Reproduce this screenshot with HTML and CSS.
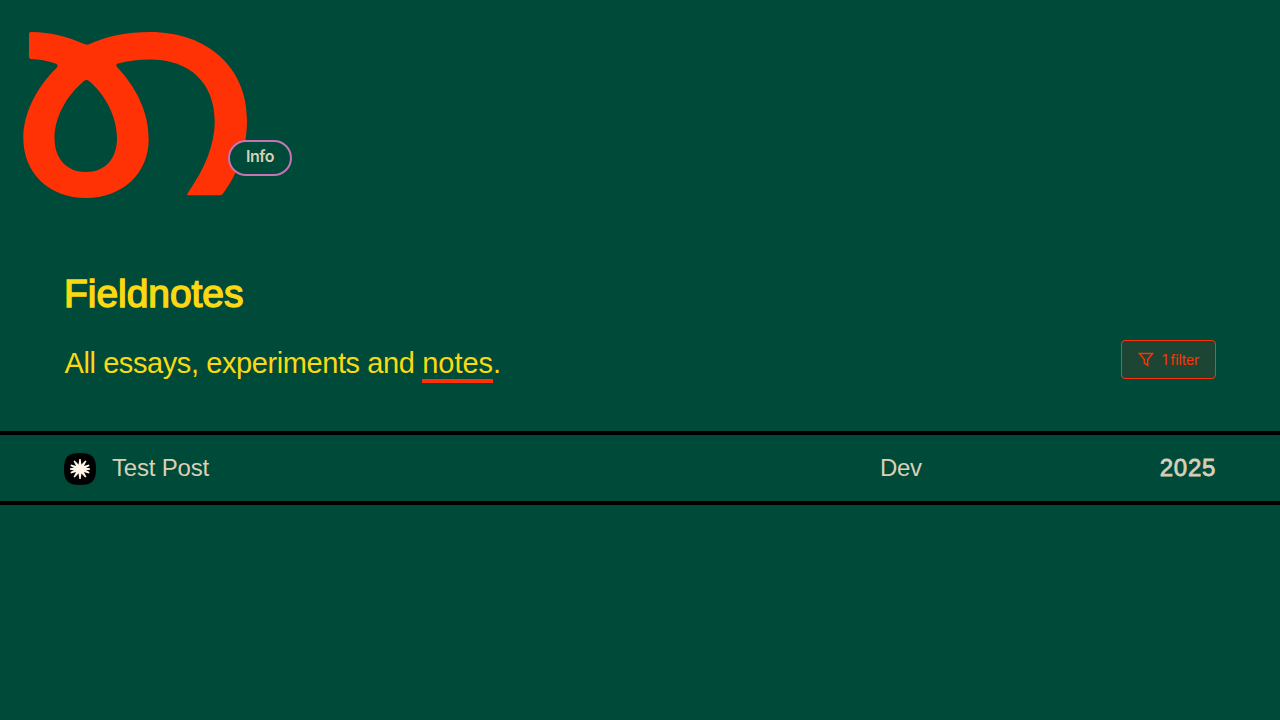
FILE: index.html
```html
<!DOCTYPE html>
<html lang="en">
<head>
<meta charset="utf-8">
<title>Fieldnotes</title>
<link rel="stylesheet" href="styles.css">
</head>
<body>
<header class="header">
  <a class="brand" href="#" aria-label="Home">
    <svg class="logo" viewBox="0 0 226 168" width="226" height="168">
      <path fill-rule="evenodd" d="M6 3Q6 1 8 1C29 1 45 6 62 13.300Q64 14.200 66 13.300C83 5 105 1 127 1C185 1 224 37 224 89C224 119 214 144 200 162.500Q199 164.300 197.500 164.300H165.500Q163.500 164.300 164.800 162C183 136 191.700 112 191.700 91C191.700 52 167 28.500 127 28.500C115 28.500 105 30 95 32.500Q92 33.500 94 36C114 57 125.700 82 125.700 108C125.700 143 99 167 63 167C27 167 .300 143 .300 107C.300 83 13 57 33.500 37Q36 34 33 32.700C26 30 17 28.500 8 28Q6 28 6 26ZM61 50C43 65 31.500 87 31.500 107C31.500 128 44 141 63 141C82 141 94 128 94 107C94 87 83 64 66 50Q63.500 48 61 50Z"/>
    </svg>
  </a>
  <a class="info" href="#">Info</a>
</header>
<main>
  <section class="intro">
    <h1 class="title">Fieldnotes</h1>
    <div class="intro-row">
      <p class="lead">All essays, experiments and <span class="marked">notes</span>.</p>
      <button class="filter">
        <svg class="funnel" viewBox="0 0 16 16" width="16" height="16"><path d="M1.300 1.400H14.700L9.700 7.500V13.300L6.400 11V7.500Z"/></svg>
        <span class="filter-label">1 filter</span>
      </button>
    </div>
  </section>
  <ul class="posts">
    <li class="post">
      <svg class="badge" viewBox="0 0 32 32" width="32" height="32">
        <path d="M16 0C28 0 32 4 32 16S28 32 16 32 0 28 0 16 4 0 16 0Z"/>
        <g class="star">
          <path id="ray" d="M15.300 6H16.700L18 16L16.700 26H15.300L14 16Z"/>
          <use href="#ray" transform="rotate(36 16 16)"/>
          <use href="#ray" transform="rotate(68 16 16)"/>
          <use href="#ray" transform="rotate(90 16 16)"/>
          <use href="#ray" transform="rotate(112 16 16)"/>
          <use href="#ray" transform="rotate(144 16 16)"/>
          <circle cx="16" cy="16" r="4.500"/>
        </g>
      </svg>
      <span class="post-title">Test Post</span>
      <span class="category">Dev</span>
      <span class="year">2025</span>
    </li>
  </ul>
</main>
</body>
</html>
```
FILE: styles.css
```css
* { box-sizing: border-box; }
body {
  margin: 0;
  min-height: 100vh;
  background: #004a39;
  color: #d9d0b8;
  font-family: "Liberation Sans", Arial, sans-serif;
}
a { color: inherit; text-decoration: none; }
.header {
  position: relative;
  height: 272px;
  padding: 31px 23px;
}
.brand { display: block; width: 226px; }
.logo { display: block; fill: #ff3205; }
.info {
  position: absolute;
  left: 228px;
  top: 140px;
  width: 64px;
  height: 36px;
  border: 2px solid #c475b4;
  border-radius: 18px;
  background: #004a39;
  font-family: Inter, sans-serif;
  font-size: 16px;
  font-weight: 600;
  line-height: 29px;
  text-align: center;
  letter-spacing: -.4px;
}
.intro { padding: 0 64px; color: #fad912; }
.title {
  margin: 0;
  font-size: 39px;
  font-weight: 400;
  line-height: 43px;
  letter-spacing: -.05px;
  -webkit-text-stroke: 1.400px currentColor;
}
.intro-row {
  display: flex;
  justify-content: space-between;
  align-items: flex-start;
  padding-top: 25px;
  height: 116px;
}
.lead {
  margin: 4px 0 0;
  padding-left: .5px;
  font-size: 29px;
  line-height: 38px;
  letter-spacing: -.41px;
}
.marked {
  display: inline-block;
  height: 39px;
  border-bottom: 4px solid #ff3205;
  letter-spacing: 0;
}
.filter {
  display: flex;
  align-items: center;
  gap: 8px;
  width: 95px;
  height: 39px;
  padding: 0 0 0 16px;
  border: 1px solid #ff3205;
  border-radius: 4px;
  background: #1c4633;
  color: #ff3205;
  font: 14px Inter, sans-serif;
}
.filter-label { letter-spacing: -.2px; word-spacing: -1px; }
.funnel { fill: none; stroke: currentColor; stroke-width: 1.500; }
.posts { margin: 0; padding: 0; list-style: none; }
.post {
  display: grid;
  grid-template-columns: 32px 752px 1fr auto;
  column-gap: 16px;
  align-items: center;
  height: 74px;
  padding: 0 64px;
  border-top: 4px solid #000;
  border-bottom: 4px solid #000;
  font-size: 24px;
  line-height: 32px;
}
.badge { margin-top: 2px; }
.star { fill: #fff5e8; }
.post-title { letter-spacing: -.18px; }
.category { letter-spacing: -.35px; }
.year { letter-spacing: .7px; -webkit-text-stroke: .8px currentColor; }
```
